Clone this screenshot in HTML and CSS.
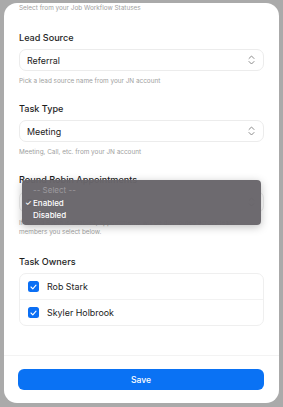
FILE: index.html
```html
<!DOCTYPE html>
<html lang="en">
<head>
    <meta charset="UTF-8">
    <meta name="viewport" content="width=device-width, initial-scale=1.0">
    <title>Task Settings</title>
    <link rel="stylesheet" href="styles.css">
</head>
<body>
    <div class="sheet">
        <div class="sheet-body">
            <p class="hint first">Select from your Job Workflow Statuses</p>

            <div class="field">
                <label class="label">Lead Source</label>
                <div class="select">
                    <span>Referral</span>
                    <svg class="chev" width="7" height="10" viewBox="0 0 7 10"><path d="M1 3.5 L3.5 1 L6 3.5 M1 6.5 L3.5 9 L6 6.5" fill="none" stroke="#8a8a8a" stroke-width="1" stroke-linecap="round" stroke-linejoin="round"/></svg>
                </div>
                <p class="hint">Pick a lead source name from your JN account</p>
            </div>

            <div class="field">
                <label class="label">Task Type</label>
                <div class="select">
                    <span>Meeting</span>
                    <svg class="chev" width="7" height="10" viewBox="0 0 7 10"><path d="M1 3.5 L3.5 1 L6 3.5 M1 6.5 L3.5 9 L6 6.5" fill="none" stroke="#8a8a8a" stroke-width="1" stroke-linecap="round" stroke-linejoin="round"/></svg>
                </div>
                <p class="hint">Meeting, Call, etc. from your JN account</p>
            </div>

            <div class="field rr">
                <label class="label">Round Robin Appointments</label>
                <div class="select">
                    <span>Enabled</span>
                    <svg class="chev" width="7" height="10" viewBox="0 0 7 10"><path d="M1 3.5 L3.5 1 L6 3.5 M1 6.5 L3.5 9 L6 6.5" fill="none" stroke="#8a8a8a" stroke-width="1" stroke-linecap="round" stroke-linejoin="round"/></svg>
                </div>
                <p class="hint">If Round Robin is enabled, appointments will be distributed across team members you select below.</p>

                <!-- native select popup -->
                <ul class="menu">
                    <li class="muted">-- Select --</li>
                    <li class="checked">Enabled</li>
                    <li>Disabled</li>
                </ul>
            </div>

            <div class="field team">
                <label class="label">Task Owners</label>
                <div class="owners">
                    <div class="owner">
                        <span class="box"><svg width="7" height="6" viewBox="0 0 7 6"><path d="M1 3 L2.8 4.8 L6 1.2" fill="none" stroke="#fff" stroke-width="1.1" stroke-linecap="round" stroke-linejoin="round"/></svg></span>
                        <span>Rob Stark</span>
                    </div>
                    <div class="owner">
                        <span class="box"><svg width="7" height="6" viewBox="0 0 7 6"><path d="M1 3 L2.8 4.8 L6 1.2" fill="none" stroke="#fff" stroke-width="1.1" stroke-linecap="round" stroke-linejoin="round"/></svg></span>
                        <span>Skyler Holbrook</span>
                    </div>
                </div>
            </div>
        </div>

        <footer class="sheet-foot">
            <button class="save">Save</button>
        </footer>
    </div>
</body>
</html>
```

FILE: styles.css
```css
html, body {
    margin: 0;
    height: 100%;
}
* {
    box-sizing: border-box;
}
body {
    font-family: Inter, "Noto Sans", sans-serif;
    background-color: #aaaaaa;
    color: #222;
    padding: 3px 4px 4px;
}
.sheet {
    background: white;
    border-radius: 13px;
    height: 400px;
    display: flex;
    flex-direction: column;
    overflow: hidden;
}
.sheet-body {
    flex: 1;
    padding: 0 15px;
}
.hint {
    margin: 0;
    font-size: 6.4px;
    line-height: 9px;
    color: #a0a0a0;
}
.hint.first {
    margin: 1px 0 19px;
}
.field {
    margin-top: 17px;
}
.field.rr {
    position: relative;
}
.field.team {
    margin-top: 19px;
}
.label {
    display: block;
    font-size: 9.1px;
    font-weight: 500;
    color: #1e1e1e;
    line-height: 12px;
    margin-bottom: 5px;
}
.select {
    height: 22px;
    border: 1px solid #ececec;
    border-radius: 7px;
    display: flex;
    align-items: center;
    justify-content: space-between;
    padding: 0 8px 0 7px;
    font-size: 8.9px;
    color: #222;
    margin-bottom: 6px;
}
.chev {
    display: block;
}
.menu {
    position: absolute;
    left: 3px;
    right: 3px;
    top: 6px;
    margin: 0;
    padding: 4px 0 3px;
    list-style: none;
    background: rgba(104, 101, 106, 0.97);
    border-radius: 4px;
    box-shadow: 0 2px 8px rgba(0, 0, 0, 0.25);
    font-size: 8px;
    font-weight: 500;
    color: #fff;
}
.menu li {
    line-height: 12.5px;
    padding-left: 11px;
    position: relative;
}
.menu li.muted {
    color: #9d9a9f;
    font-weight: 400;
}
.menu li.checked::before {
    content: "\2713";
    position: absolute;
    left: 3px;
    font-size: 7.5px;
}
.owners {
    border: 1px solid #efefef;
    border-radius: 7px;
    margin-top: 1px;
}
.owner {
    height: 25px;
    display: flex;
    align-items: center;
    gap: 8px;
    padding-left: 8px;
    font-size: 8.9px;
    color: #222;
}
.owner + .owner {
    border-top: 1px solid #f2f2f2;
    height: 26px;
}
.box {
    width: 11px;
    height: 11px;
    border-radius: 2.5px;
    background: #0b6ff4;
    display: flex;
    align-items: center;
    justify-content: center;
}
.sheet-foot {
    border-top: 1px solid #f3f3f3;
    padding: 13px 15px 13px 14px;
}
.save {
    display: block;
    width: 100%;
    height: 21px;
    border: none;
    border-radius: 6px;
    background: #0a72f4;
    color: white;
    font-family: inherit;
    font-size: 8.6px;
    font-weight: 500;
}
```
